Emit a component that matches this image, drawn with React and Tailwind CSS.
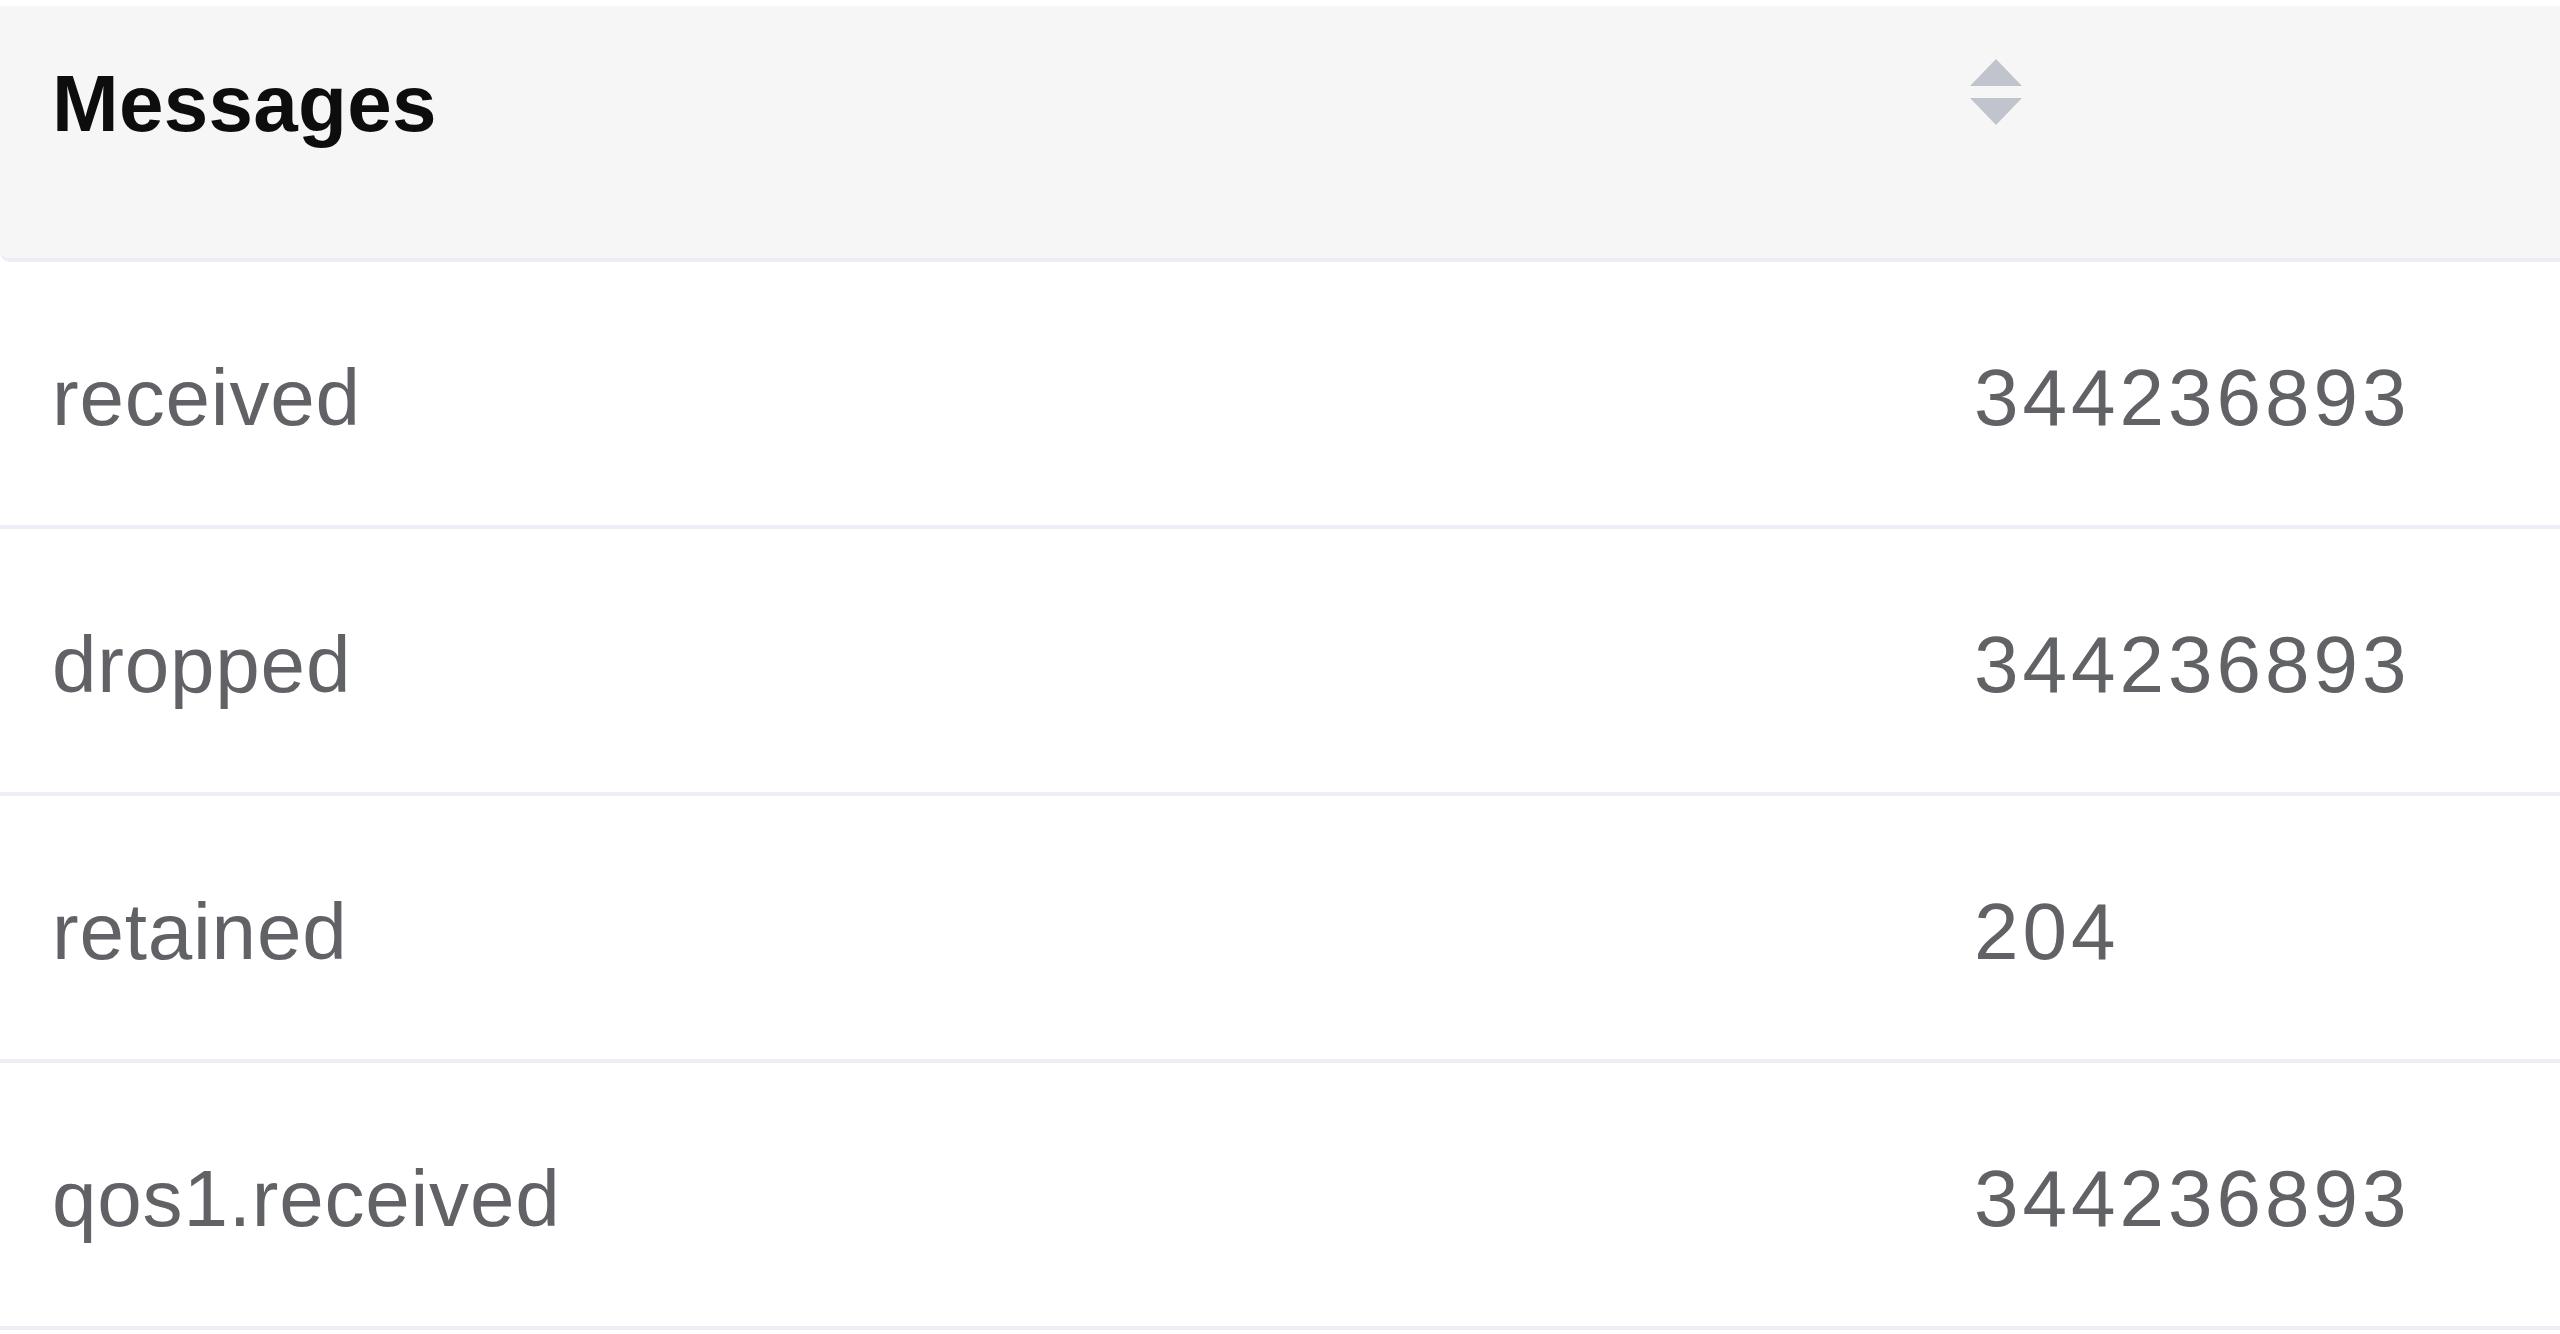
const rows = [
  { name: 'received', value: '344236893' },
  { name: 'dropped', value: '344236893' },
  { name: 'retained', value: '204' },
  { name: 'qos1.received', value: '344236893' },
];

function SortCaret() {
  return (
    <svg width="52" height="66" viewBox="0 0 52 66" className="block">
      <polygon points="26,0 52,27 0,27" fill="#c0c4cc" />
      <polygon points="0,39 52,39 26,66" fill="#c0c4cc" />
    </svg>
  );
}

export default function App() {
  return (
    <div className="w-[2560px] h-[1334px] bg-white overflow-hidden font-['Liberation_Sans',Arial,sans-serif] text-[80px] leading-none">
      <div className="mt-[6px] h-[256px] flex bg-[#f6f6f6] border-b-4 border-[#ebeef5] rounded-bl-[10px]">
        <div className="flex-1 pl-[52px] pt-[58px] font-bold tracking-[0.3px] text-[#0d0d0d]">Messages</div>
        <div className="w-[590px] pt-[53px]">
          <SortCaret />
        </div>
      </div>

      {rows.map((r, i) => (
        <div key={i} className="h-[267px] flex items-center border-b-4 border-[#ebeef5] text-[#606266]">
          <div className="flex-1 pl-[52px] pt-[9px] tracking-[0.8px]">{r.name}</div>
          <div className="w-[586px] pt-[9px] tracking-[4px]">{r.value}</div>
        </div>
      ))}
    </div>
  );
}
